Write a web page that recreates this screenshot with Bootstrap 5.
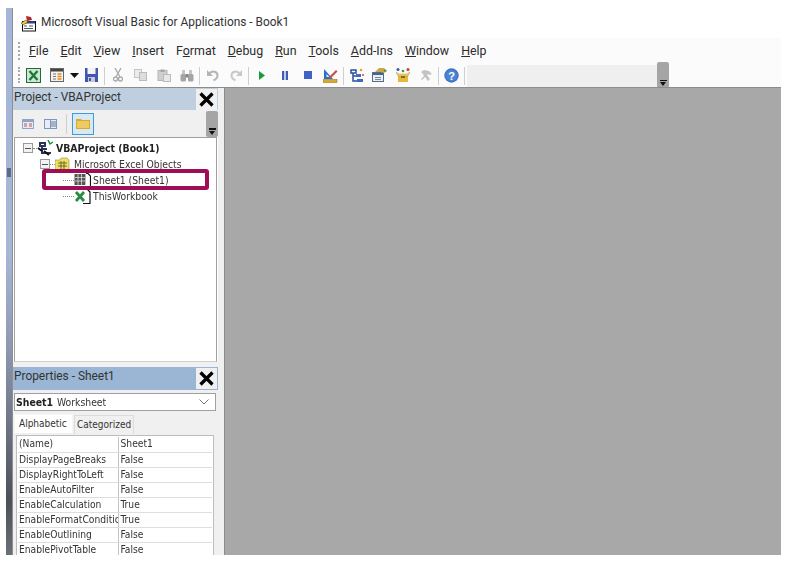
<!DOCTYPE html>
<html lang="en">
<head>
<meta charset="utf-8">
<title>Microsoft Visual Basic for Applications - Book1</title>
<link href="https://cdn.jsdelivr.net/npm/bootstrap@5.3.0/dist/css/bootstrap.min.css" rel="stylesheet">
<style>
html,body{background:#fff;height:100%;overflow:hidden}
body{font-family:Roboto,"Noto Sans","Liberation Sans",sans-serif;color:#333}
.vbe-win{margin:8px 0 0 6px;width:775px;height:547px;filter:blur(.3px)}
.vbe-strip{width:7px;flex:none;border-right:1px solid #8f8f8f;background:linear-gradient(180deg,#a4b5d8 0,#a6b6d6 45%,#8f98b2 62%,#69707f 78%,#4c5058 90%,#6b6f78 100%)}
.vbe-grab{width:4px;height:9px;margin:160px 0 0 1px;background:#5d6a85}
.vbe-main{width:768px}
.vbe-title{height:30px;font-size:11.900px;padding-left:8px;gap:4px;background:#fff;color:#333}
.vbe-menu{height:25px;background:#fbfbfb;padding:0 0 0 5px;font-size:12.400px;color:#2c2c2c}
.vbe-grip{width:2px;height:18px;margin-right:9px;border-left:2px dotted #a9a9a9}
.vbe-menu span{display:block;line-height:25px}
.menu-row{gap:12px}
.vbe-tools{height:24px;background:#fbfbfb;padding-left:5px}
.tb-grip{width:2px;height:16px;border-left:2px dotted #a9a9a9;margin-right:2px}
.tb-cell{width:23px;height:24px;flex:none;display:flex;align-items:center;justify-content:center}
.tb-cell-s{width:12px}
.tb-sep{width:1px;height:18px;margin:0 1px;background:#cfcfcf;flex:none}
.tb-slot{width:190px;height:22px;margin:2px 0 0 1px;background:#efefef;flex:none}
.tb-over{width:12px;height:26px;margin-top:-1px;background:#a5a5a5;border-radius:2px;flex:none;display:flex;flex-direction:column;align-items:center;justify-content:flex-end;padding-bottom:2px}
.ov-bar{width:7px;height:1.500px;background:#111;margin-bottom:1px}
.ov-tri{width:0;height:0;border:3.500px solid transparent;border-top:4px solid #111;border-bottom:0}
.vbe-work{height:468px;border-top:1px solid #8c8c8c;margin-top:0}
.vbe-side{width:205px;flex:none}
.vbe-gutter{width:6px;flex:none;background:#f0f0f0}
.vbe-gray{flex:1;background:#a8a8a8;border-left:1px solid #8c8c8c}
.pane-head{height:22px;background:#bfcfdf;font-size:11.900px;line-height:18px;color:#333;padding-left:1px}
.pane-head-dark{height:23px;background:#9ab6d4}
.pane-x{width:21px;height:21px;background:#f0f0f0;margin:1px 1px 0 0}
.pane-bar{height:27px;background:#f0f0f0;padding-left:4px}
.pb-cell{width:22px;height:22px;flex:none;display:flex;align-items:center;justify-content:center}
.pb-on{background:#d8e9f6;border:1px solid #3f9bd9;margin-left:5px}
.pb-sep{width:1px;height:20px;background:#cfcfcf;margin-left:5px}
.pb-over{height:26px;margin:0 0 0 auto}
.tree-box{height:225px;background:#fff;border:1px solid #a0a0a0;border-bottom-color:#d0d0d0;margin:0 1px 0 1px;font-family:"DejaVu Sans Condensed","DejaVu Sans",sans-serif;font-stretch:condensed;font-size:10.300px;color:#333;padding-top:2px}
.tree-row{height:16px;line-height:16px;white-space:nowrap}
.tree-row b{font-weight:700;font-size:10.400px;color:#222}
.pm{width:10px;height:10px;border:1px solid #9a9a9a;background:#f2f2f2;flex:none;display:flex;align-items:center;justify-content:center}
.pm::before{content:"";width:6px;height:1px;background:#555}
.dash{border-top:1px dotted #8a8a8a;height:0;flex:none}
.ico-gap{margin-right:2px;flex:none}
.ico-gap-w{margin-right:4px;flex:none}
.dash-4{width:4px}
.dash-5{width:5px}
.dash-11{width:11px}
.ind-25{padding-left:25px}
.ind-48{padding-left:48px}
.mark-frame{position:absolute;left:27px;top:31px;width:167px;height:21px;border:4px solid #9d0e55;border-radius:3px;pointer-events:none}
.pane-split{height:5px;background:#f0f0f0}
.prop-area{background:#f0f0f0;height:165px;overflow:hidden;font-family:"DejaVu Sans Condensed","DejaVu Sans",sans-serif;font-stretch:condensed}
.prop-combo{height:18px;margin:3px 2px 0 1px;background:#fff;border:1px solid #a0a0a0;font-size:10.300px;line-height:16px;padding:0 6px 0 1px;color:#333}
.prop-combo b{font-size:10.400px;color:#222;margin-right:4px}
.prop-tabs{margin:3px 0 0 1px;border:0;font-size:10px;height:19px}
.prop-tabs .tabx{display:block;height:19px;line-height:18px;color:#333;background:#f0f0f0;border:1px solid #dcdcdc;border-bottom:0;border-radius:0}
.prop-tabs .tabx.active{background:#fff;border-color:#f5f5f5;padding:0 3px 0 4px;width:59px;line-height:17px;margin-right:1px}
.prop-tabs .tabx:not(.active){margin:1px 0 0 0;width:60px;padding:0 2px;line-height:17px}
.prop-wrap{background:#fff;margin:2px 4px 0 3px;border:1px solid #bdbdbd;border-bottom:0;padding:1px 1px 0}
.prop-table{table-layout:fixed;width:100%;margin:0;border-collapse:collapse;--bs-table-bg:#fff;font-size:10.200px;color:#333}
.prop-table td{height:15.100px;padding:0 0 0 2px;line-height:14px;border:0;border-bottom:1px solid #dedede;overflow:hidden;white-space:nowrap;color:#333}
.prop-table td:first-child{width:100px;padding-left:1px;border-right:1px solid #c4c4c4}
</style>
</head>
<body>
<div class="vbe-win d-flex">
  <div class="vbe-strip"><div class="vbe-grab"></div></div>
  <div class="vbe-main d-flex flex-column">
    <div class="vbe-title d-flex align-items-center">
      <svg width="16" height="17" viewBox="0 0 16 17"><rect x="1.500" y="6.500" width="13" height="9.500" fill="#fff" stroke="#111"/><rect x="2" y="6" width="12" height="2.500" fill="#2d3f80"/><path d="M3 11h3M8 11h4M3 13.500h9" stroke="#555"/><path d="M5 1l5 1 1 3-5 1z" fill="#b3262a"/><path d="M0 8l5-3 2 2-5 3z" fill="#e8d21e" stroke="#333" stroke-width=".5"/></svg>
      <span>Microsoft Visual Basic for Applications - Book1</span>
    </div>
    <nav class="vbe-menu d-flex align-items-center">
      <div class="vbe-grip"></div>
      <div class="d-flex menu-row">
        <span><u>F</u>ile</span><span><u>E</u>dit</span><span><u>V</u>iew</span><span><u>I</u>nsert</span><span>F<u>o</u>rmat</span><span><u>D</u>ebug</span><span><u>R</u>un</span><span><u>T</u>ools</span><span><u>A</u>dd-Ins</span><span><u>W</u>indow</span><span><u>H</u>elp</span>
      </div>
    </nav>
    <div class="vbe-tools d-flex">
      <div class="tb-grip mt-1"></div>
      <div class="tb-cell"><svg width="15" height="15" viewBox="0 0 15 15"><rect x=".5" y=".5" width="14" height="14" fill="#cfe6d2" stroke="#1f6e38"/><path d="M3.500 3l8 9M11.500 3l-8 9" stroke="#1f7a3a" stroke-width="2.400"/></svg></div>
      <div class="tb-cell"><svg width="14" height="14" viewBox="0 0 14 14"><rect x=".5" y=".5" width="13" height="13" fill="#f2f2f2" stroke="#666"/><rect x="1" y="1" width="12" height="2.500" fill="#444"/><path d="M3 6h3M3 8.500h3M3 11h3" stroke="#777"/><path d="M7.500 6h4M7.500 8.500h4M7.500 11h4" stroke="#e08a1e" stroke-width="1.500"/></svg></div>
      <div class="tb-cell tb-cell-s"><svg width="9" height="5" viewBox="0 0 9 5"><path d="M0 0h9L4.500 5z" fill="#111"/></svg></div>
      <div class="tb-cell"><svg width="13" height="14" viewBox="0 0 13 14"><path d="M0 0h13v14H0z" fill="#4256b0"/><rect x="2.500" y="0" width="8" height="6" fill="#f3f3f7"/><rect x="3" y="9" width="7" height="5" fill="#c3c8dd"/><rect x="4" y="10" width="2" height="3" fill="#4256b0"/></svg></div>
      <div class="tb-sep mt-1"></div>
      <div class="tb-cell"><svg width="10" height="14" viewBox="0 0 10 14"><path d="M2 0l5 9M8 0L3 9" stroke="#a9a9a9" stroke-width="1.300" fill="none"/><circle cx="2.500" cy="11" r="2" fill="none" stroke="#a9a9a9" stroke-width="1.300"/><circle cx="7.500" cy="11" r="2" fill="none" stroke="#a9a9a9" stroke-width="1.300"/></svg></div>
      <div class="tb-cell"><svg width="13" height="12" viewBox="0 0 13 12"><rect x=".5" y=".5" width="7" height="8" fill="#ececec" stroke="#c5c5c5"/><rect x="5.500" y="3.500" width="7" height="8" fill="#ddd" stroke="#bbb"/></svg></div>
      <div class="tb-cell"><svg width="14" height="13" viewBox="0 0 14 13"><rect x="1" y="1.500" width="9" height="10" fill="#cfcfcf" stroke="#b5b5b5"/><rect x="3.500" y=".5" width="4" height="2.500" fill="#a5a5a5"/><rect x="6.500" y="5.500" width="7" height="7" fill="#e8e8e8" stroke="#bbb"/></svg></div>
      <div class="tb-cell"><svg width="14" height="13" viewBox="0 0 14 13"><rect x=".5" y="5" width="5.500" height="7.500" rx="1.500" fill="#a5a5a5"/><rect x="8" y="5" width="5.500" height="7.500" rx="1.500" fill="#a5a5a5"/><rect x="5.500" y="5" width="3" height="3.500" fill="#888"/><rect x="2" y="1" width="3" height="4" fill="#c5c5c5"/><rect x="9" y="1" width="3" height="4" fill="#c5c5c5"/></svg></div>
      <div class="tb-sep mt-1"></div>
      <div class="tb-cell"><svg width="12" height="12" viewBox="0 0 12 12"><path d="M2.500 4.500C5 1.500 10.500 2 10.500 6.500c0 2.500-2 4-4 5" fill="none" stroke="#b5b5b5" stroke-width="2"/><path d="M0 1v6h6z" fill="#b5b5b5"/></svg></div>
      <div class="tb-cell"><svg width="12" height="12" viewBox="0 0 12 12"><path d="M9.500 4.500C7 1.500 1.500 2 1.500 6.500c0 2.500 2 4 4 5" fill="none" stroke="#c8c8c8" stroke-width="2"/><path d="M12 1v6H6z" fill="#c8c8c8"/></svg></div>
      <div class="tb-sep mt-1"></div>
      <div class="tb-cell"><svg width="6" height="9" viewBox="0 0 6 9"><path d="M0 0l6 4.500L0 9z" fill="#1b9a3a"/></svg></div>
      <div class="tb-cell"><svg width="6" height="9" viewBox="0 0 6 9"><rect width="2.300" height="9" fill="#3d5db5"/><rect x="3.700" width="2.300" height="9" fill="#3d5db5"/></svg></div>
      <div class="tb-cell"><svg width="8" height="8" viewBox="0 0 8 8"><rect width="8" height="8" fill="#3f62c4"/></svg></div>
      <div class="tb-cell"><svg width="15" height="15" viewBox="0 0 15 15"><path d="M1 1v10h9z" fill="#2f6cc4"/><path d="M3.500 6v3h3z" fill="#dfe9f7"/><rect x="0" y="11.500" width="14" height="3" fill="#d9a92b" stroke="#8a6a12" stroke-width=".5"/><path d="M6 9l7-7 1.500 1.500-7 7z" fill="#c94a4a"/></svg></div>
      <div class="tb-sep mt-1"></div>
      <div class="tb-cell"><svg width="14" height="15" viewBox="0 0 14 15"><path d="M1 2h5v3H1zM3 5v8h7M3 8h4" fill="none" stroke="#2c4f9e" stroke-width="1.500"/><rect x="6" y="6" width="5" height="3" fill="#3e6bc0"/><rect x="7" y="11" width="6" height="3" fill="#3e6bc0"/><circle cx="11" cy="2" r="1.300" fill="#e2a32c"/><circle cx="13" cy="7" r="1" fill="#d1413a"/></svg></div>
      <div class="tb-cell"><svg width="15" height="14" viewBox="0 0 15 14"><rect x=".5" y="4.500" width="11" height="9" fill="#e8eef6" stroke="#5b6b86"/><rect x="1" y="5" width="10" height="2" fill="#48638f"/><path d="M3 9.500h6M3 11.500h6" stroke="#7688a5"/><path d="M3 4l4-4h5l3 3-3 2-3-1z" fill="#c9a64a"/><path d="M12 1l3 2-3 1z" fill="#4d9a3c"/></svg></div>
      <div class="tb-cell"><svg width="14" height="14" viewBox="0 0 14 14"><path d="M2 6h10v8H2z" fill="#e3b93e"/><path d="M0 4l3 2h8l3-2-2 4H2z" fill="#f0d374" stroke="#a6811d" stroke-width=".4"/><rect x="5" y="8" width="4" height="2" fill="#8a6a12"/><circle cx="2" cy="1.500" r="1.500" fill="#2e5db5"/><circle cx="7" cy="3" r="1.300" fill="#3c9a48"/><circle cx="12" cy="1.500" r="1.500" fill="#cf3d36"/></svg></div>
      <div class="tb-cell"><svg width="12" height="11" viewBox="0 0 12 11"><path d="M1 2l3-2 5 1 3 3-2 1-2-1-1 1 3 4-2 2-3-4-3 3-1-1 3-3-1-2z" fill="#c4c4c4"/></svg></div>
      <div class="tb-sep mt-1"></div>
      <div class="tb-cell"><svg width="15" height="15" viewBox="0 0 15 15"><circle cx="7.500" cy="7.500" r="7.200" fill="#3f74c4"/><circle cx="7.500" cy="7.500" r="5.800" fill="#4a83d2"/><text x="7.500" y="11.500" text-anchor="middle" font-family="Liberation Sans" font-weight="700" font-size="11" fill="#fff">?</text></svg></div>
      <div class="tb-sep mt-1"></div>
      <div class="tb-slot"></div>
      <div class="tb-over"><div class="ov-bar"></div><div class="ov-tri"></div></div>
    </div>
    <div class="vbe-work d-flex">
      <div class="vbe-side d-flex flex-column">
        <div class="pane-head d-flex justify-content-between">
          <span>Project - VBAProject</span>
          <div class="pane-x d-flex align-items-center justify-content-center"><svg width="15" height="15" viewBox="0 0 15 15"><path d="M1.500 1.500l12 12M13.500 1.500l-12 12" stroke="#000" stroke-width="3.200"/></svg></div>
        </div>
        <div class="pane-bar d-flex align-items-center">
          <div class="pb-cell"><svg width="12" height="10" viewBox="0 0 12 10"><rect width="12" height="10" fill="#8fa5c8"/><rect x="1" y="3" width="10" height="6" fill="#e6ecf5"/><path d="M2 5h3M7 5h3M2 7h3M7 7h3" stroke="#c2564a"/></svg></div>
          <div class="pb-cell"><svg width="13" height="10" viewBox="0 0 13 10"><rect width="13" height="10" fill="#7f96bd"/><rect x="1" y="1" width="5" height="8" fill="#e6ecf5"/><rect x="7" y="1" width="5" height="8" fill="#e6ecf5"/><path d="M7 3h5M7 5h5M7 7h5" stroke="#67799a"/></svg></div>
          <div class="pb-sep"></div>
          <div class="pb-cell pb-on"><svg width="14" height="11" viewBox="0 0 14 11"><path d="M0 1h5l1 1h8v9H0z" fill="#d9a92b"/><path d="M1 3h12v7H1z" fill="#eccb63"/></svg></div>
          <div class="tb-over pb-over"><div class="ov-bar"></div><div class="ov-tri"></div></div>
        </div>
        <div class="tree-box position-relative">
          <div class="tree-row d-flex align-items-center ps-2">
            <div class="pm"></div><div class="dash dash-4"></div>
            <svg class="ico-gap" width="17" height="16" viewBox="0 0 17 16"><path d="M3 3h5v3H3zM5 6v7h9M5 9h5" fill="none" stroke="#26355c" stroke-width="2"/><path d="M1 8l4 3M7 11l5 4" stroke="#111" stroke-width="2"/><path d="M11 0l2 4 3-2" fill="none" stroke="#1d8a3c" stroke-width="1.500"/></svg>
            <b>VBAProject (Book1)</b>
          </div>
          <div class="tree-row d-flex align-items-center ind-25">
            <div class="pm"></div><div class="dash dash-5"></div>
            <svg class="ico-gap-w" width="15" height="14" viewBox="0 0 15 14"><path d="M0 3h5l1-2h6l2 2v10H0z" fill="#f0e05c" stroke="#8b8b5c" stroke-width=".6"/><path d="M3 6h9M3 9h9M6 4v8M9 4v8" stroke="#54502a" stroke-width=".8"/></svg>
            <span>Microsoft Excel Objects</span>
          </div>
          <div class="tree-row d-flex align-items-center ind-48">
            <div class="dash dash-11"></div>
            <svg class="ico-gap" width="17" height="15" viewBox="0 0 17 15"><rect x=".5" y="1" width="11" height="11" fill="#555"/><path d="M1 4.500h10M1 8h10M4 1v11M7.500 1v11" stroke="#eee" stroke-width=".7"/><path d="M12 .5h2l2.500 2.500V14.500h-5" fill="#fff" stroke="#111" stroke-width="1.200"/></svg>
            <span>Sheet1 (Sheet1)</span>
          </div>
          <div class="tree-row d-flex align-items-center ind-48">
            <div class="dash dash-11"></div>
            <svg class="ico-gap" width="17" height="15" viewBox="0 0 17 15"><path d="M8 .5h5.500L16 3v11.500H9" fill="#fff" stroke="#111" stroke-width="1.200"/><path d="M2 3l8 9M10 3l-8 9" stroke="#2b8a45" stroke-width="2.800"/></svg>
            <span>ThisWorkbook</span>
          </div>
          <div class="mark-frame"></div>
        </div>
        <div class="pane-split"></div>
        <div class="pane-head pane-head-dark d-flex justify-content-between">
          <span>Properties - Sheet1</span>
          <div class="pane-x d-flex align-items-center justify-content-center"><svg width="15" height="15" viewBox="0 0 15 15"><path d="M1.500 1.500l12 12M13.500 1.500l-12 12" stroke="#000" stroke-width="3.200"/></svg></div>
        </div>
        <div class="prop-area flex-grow-1">
          <div class="prop-combo d-flex justify-content-between align-items-center">
            <span><b>Sheet1</b>Worksheet</span>
            <svg width="10" height="6" viewBox="0 0 10 6"><path d="M.5.500L5 5 9.500.5" fill="none" stroke="#777"/></svg>
          </div>
          <div class="nav prop-tabs">
            <span class="tabx active">Alphabetic</span>
            <span class="tabx">Categorized</span>
          </div>
          <div class="prop-wrap">
            <table class="table prop-table">
              <tbody>
                <tr><td>(Name)</td><td>Sheet1</td></tr>
                <tr><td>DisplayPageBreaks</td><td>False</td></tr>
                <tr><td>DisplayRightToLeft</td><td>False</td></tr>
                <tr><td>EnableAutoFilter</td><td>False</td></tr>
                <tr><td>EnableCalculation</td><td>True</td></tr>
                <tr><td>EnableFormatConditic</td><td>True</td></tr>
                <tr><td>EnableOutlining</td><td>False</td></tr>
                <tr><td>EnablePivotTable</td><td>False</td></tr>
              </tbody>
            </table>
          </div>
        </div>
      </div>
      <div class="vbe-gutter"></div>
      <div class="vbe-gray"></div>
    </div>
  </div>
</div>
<script src="https://cdn.jsdelivr.net/npm/bootstrap@5.3.0/dist/js/bootstrap.bundle.min.js"></script>
</body>
</html>
